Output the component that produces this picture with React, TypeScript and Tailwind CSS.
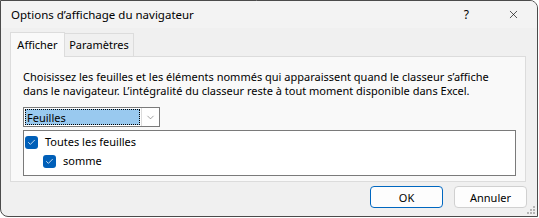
import { Check, ChevronDown, X } from "lucide-react";

function Box() {
  return (
    <span className="flex h-[13px] w-[13px] shrink-0 items-center justify-center rounded-[3px] bg-[#005fb8]">
      <Check size={9} strokeWidth={2} className="text-white" />
    </span>
  );
}

export default function App() {
  return (
    <div className="h-[218px] w-[539px] bg-white font-['Noto_Sans',sans-serif] text-[11px] text-black">
      <div className="flex h-[217px] w-[538px] flex-col overflow-hidden rounded-tr-[8px] rounded-bl-[8px] border border-[#4b4b4b] bg-[#f0f0f0]">
        {/* title bar */}
        <div className="flex h-[27px] shrink-0 items-center bg-[#f3f3f3] pl-[10px]">
          <span className="flex-1 text-[11.5px] leading-none">Options d’affichage du navigateur</span>
          <span className="mr-[38px] text-[12px] leading-none">?</span>
          <X size={13} strokeWidth={1.2} className="mr-[17px]" />
        </div>

        {/* tabs */}
        <div className="flex h-[28px] shrink-0 items-end pl-[9px]">
          <div className="z-10 -mb-px flex h-[25px] w-[55px] items-start justify-center border border-b-0 border-[#dcdcdc] bg-[#f9f9f9] pt-[4px]">
            Afficher
          </div>
          <div className="flex h-[23px] w-[69px] items-start justify-center border border-b-0 border-l-0 border-[#dcdcdc] bg-[#f0f0f0] pt-[3px]">
            Paramètres
          </div>
        </div>

        {/* panel */}
        <div className="ml-[9px] flex h-[126px] w-[516px] shrink-0 flex-col border border-[#dcdcdc] bg-[#f9f9f9] pl-[12px] pr-[10px] pt-[13px]">
          <p className="h-[28px] whitespace-nowrap leading-[14px]">
            Choisissez les feuilles et les éléments nommés qui apparaissent quand le classeur s’affiche
            <br />
            dans le navigateur. L’intégralité du classeur reste à tout moment disponible dans Excel.
          </p>

          <div className="mt-[9px] flex h-[20px] w-[137px] shrink-0 border border-[#7a7a7a] bg-white">
            <div className="m-px flex flex-1 items-center border border-dotted border-black bg-[#99c9ef] pl-[1px] leading-none">
              Feuilles
            </div>
            <div className="flex w-[18px] items-center justify-center border-l border-[#dcdcdc]">
              <ChevronDown size={11} strokeWidth={1.2} className="text-[#555]" />
            </div>
          </div>

          <div className="mt-[3px] flex h-[46px] w-[493px] shrink-0 flex-col border border-[#7a7a7a] bg-white pl-[1px] pt-[2px]">
            <div className="flex h-[19px] items-center gap-[7px]">
              <Box />
              <span>Toutes les feuilles</span>
            </div>
            <div className="flex h-[19px] items-center gap-[7px] pl-[18px]">
              <Box />
              <span>somme</span>
            </div>
          </div>
        </div>

        {/* buttons */}
        <div className="flex shrink-0 justify-end gap-[11px] pr-[10px] pt-[4px]">
          <button className="h-[22px] w-[73px] rounded-[4px] border border-[#0067c0] bg-[#fdfdfd] leading-none">
            OK
          </button>
          <button className="h-[22px] w-[73px] rounded-[4px] border border-[#d0d0d0] bg-[#fdfdfd] leading-none">
            Annuler
          </button>
        </div>

        <div className="relative flex-1">
          <svg className="absolute bottom-[1px] right-[1px]" width="9" height="9" viewBox="0 0 9 9" fill="#b5b5b5">
            <rect x="6" y="0" width="2" height="2" />
            <rect x="3" y="3" width="2" height="2" />
            <rect x="6" y="3" width="2" height="2" />
            <rect x="0" y="6" width="2" height="2" />
            <rect x="3" y="6" width="2" height="2" />
            <rect x="6" y="6" width="2" height="2" />
          </svg>
        </div>
      </div>
    </div>
  );
}
